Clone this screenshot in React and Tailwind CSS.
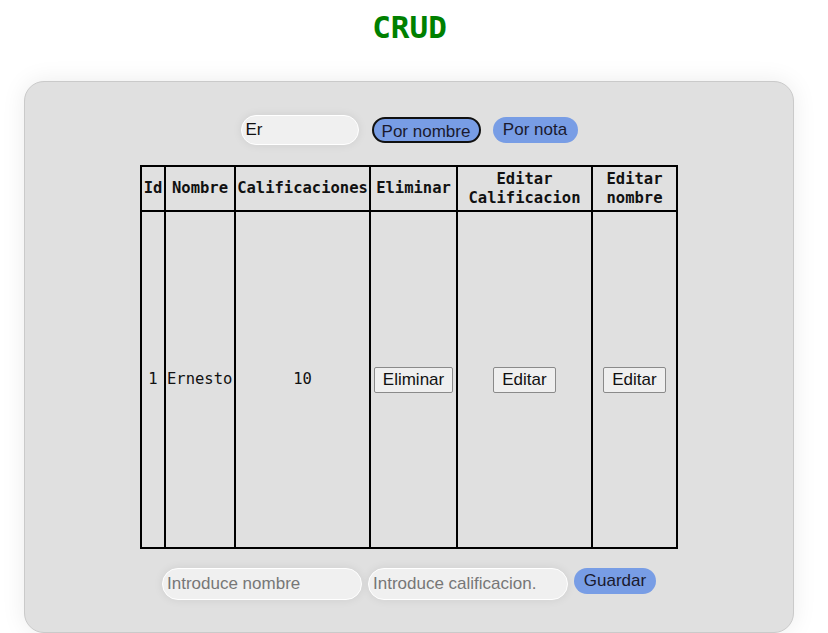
import React from 'react';

const mono = "font-['DejaVu_Sans_Mono',monospace]";
const sans = "font-['Liberation_Sans',Arial,sans-serif]";

const rows = [{ id: 1, nombre: 'Ernesto', nota: 10 }];

function NativeButton({ children }) {
  return (
    <button className={`${sans} text-[17px] leading-[18px] text-[#111] bg-[#efefef] border border-[#8a8a8a] rounded-[2px] px-[8px] py-[3px]`}>
      {children}
    </button>
  );
}

export default function App() {
  return (
    <div className="min-h-[633px] bg-white pt-[10px]">
      <h1 className={`${mono} text-center pr-[9px] text-[31px] leading-[34px] font-bold text-[#008000]`}>CRUD</h1>

      <div className="ml-[24px] mt-[37px] w-[770px] h-[552px] bg-[#e0e0e0] border border-[#cacaca] rounded-[20px] shadow-[0_0_24px_rgba(0,0,0,0.08)] flex flex-col items-center pt-[33px]">
        {/* filtros */}
        <div className="flex items-center">
          <input
            defaultValue="Er"
            className={`${sans} w-[118px] h-[30px] rounded-full bg-[#f0f0f0] border border-white shadow-[0_0_10px_rgba(0,0,0,0.08)] px-[4px] text-[17px] text-[#111] outline-none`}
          />
          <button className={`${sans} ml-[13px] w-[109px] h-[26px] rounded-full bg-[#789de5] border-2 border-[#111] text-[17px] text-[#1a1a2e]`}>
            Por nombre
          </button>
          <button className={`${sans} ml-[12px] w-[85px] h-[26px] rounded-full bg-[#789de5] text-[17px] text-[#1a1a2e]`}>
            Por nota
          </button>
        </div>

        {/* tabla */}
        <table className={`${mono} mt-[20px] w-[538px] h-[384px] border-collapse border-2 border-black text-[15.5px] text-[#111]`}>
          <thead>
            <tr className="h-[45px]">
              <th className="border-2 border-black w-[24px] px-0 font-bold leading-[19px]">Id</th>
              <th className="border-2 border-black w-[70px] px-0 font-bold leading-[19px]">Nombre</th>
              <th className="border-2 border-black w-[135px] px-0 font-bold leading-[19px]">Calificaciones</th>
              <th className="border-2 border-black w-[87px] px-0 font-bold leading-[19px]">Eliminar</th>
              <th className="border-2 border-black w-[135px] px-0 font-bold leading-[19px]">Editar<br />Calificacion</th>
              <th className="border-2 border-black px-0 font-bold leading-[19px]">Editar<br />nombre</th>
            </tr>
          </thead>
          <tbody>
            {rows.map((r) => (
              <tr key={r.id}>
                <td className="border-2 border-black text-center px-0">{r.id}</td>
                <td className="border-2 border-black px-[1px]">{r.nombre}</td>
                <td className="border-2 border-black text-center">{r.nota}</td>
                <td className="border-2 border-black text-center"><NativeButton>Eliminar</NativeButton></td>
                <td className="border-2 border-black text-center"><NativeButton>Editar</NativeButton></td>
                <td className="border-2 border-black text-center"><NativeButton>Editar</NativeButton></td>
              </tr>
            ))}
          </tbody>
        </table>

        {/* alta */}
        <div className="flex items-start mt-[19px]">
          <input
            placeholder="Introduce nombre"
            className={`${sans} w-[200px] h-[32px] rounded-full bg-[#f0f0f0] border border-white shadow-[0_0_10px_rgba(0,0,0,0.08)] px-[4px] text-[17px] placeholder:text-[#777] outline-none`}
          />
          <input
            placeholder="Introduce calificacion."
            className={`${sans} ml-[6px] w-[200px] h-[32px] rounded-full bg-[#f0f0f0] border border-white shadow-[0_0_10px_rgba(0,0,0,0.08)] px-[4px] text-[17px] placeholder:text-[#777] outline-none`}
          />
          <button className={`${sans} ml-[6px] w-[82px] h-[26px] rounded-full bg-[#789de5] text-[17px] text-[#1a1a2e]`}>
            Guardar
          </button>
        </div>
      </div>
    </div>
  );
}
